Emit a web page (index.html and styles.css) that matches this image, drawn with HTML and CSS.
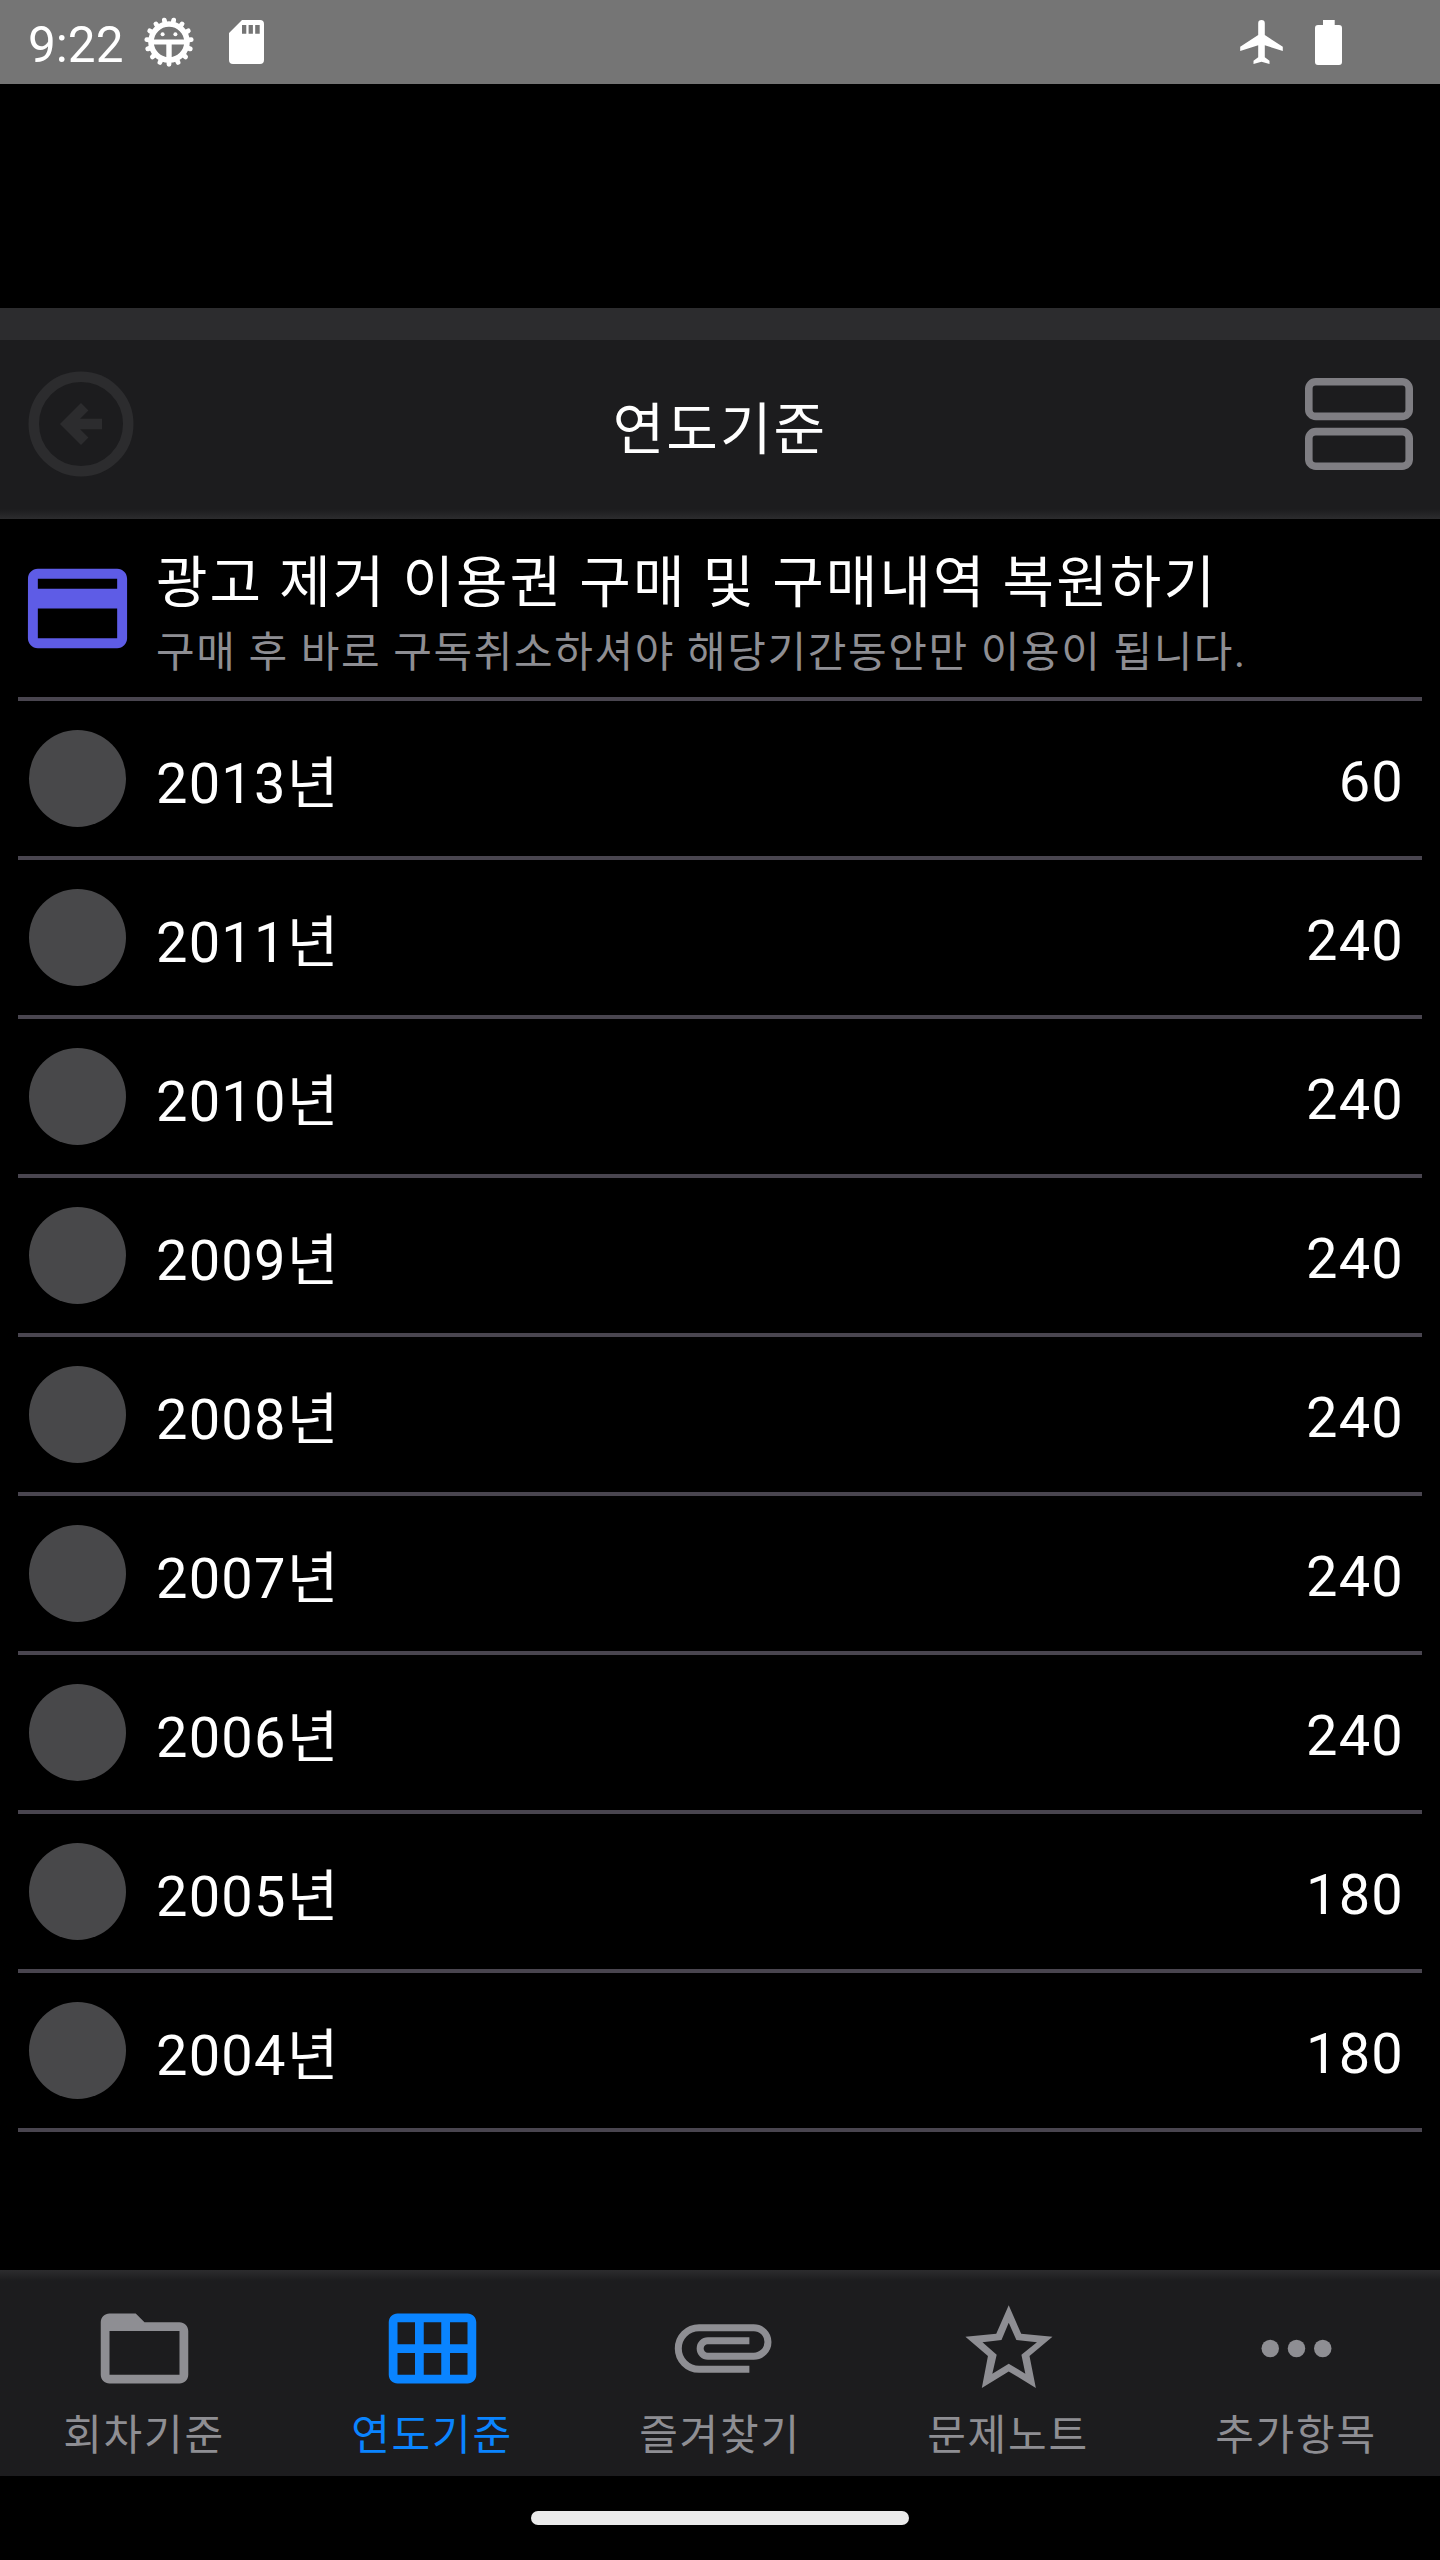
FILE: index.html
```html
<!DOCTYPE html>
<html lang="ko">
<head>
    <meta charset="UTF-8">
    <meta name="viewport" content="width=device-width, initial-scale=1.0">
    <link rel="stylesheet" href="styles.css">
    <title>연도기준</title>
</head>
<body>
    <div class="status-bar">
        <span class="time">9:22</span>
        <svg class="icon-debug" width="50" height="50" viewBox="-25 -25 50 50" fill="none" stroke="#fff">
            <circle r="18" stroke-width="5.6"/>
            <path stroke-width="4.8" stroke-linecap="round" d="M0 18V22.3M7.32 16.44L9.07 20.4M13.38 12.04L16.6 14.9M17.12 5.56L21.2 6.9M17.9-1.88L22.2-2.33M15.59-9L19.3-11.15M10.58-14.56L13.1-18.05M3.74-17.61L4.64-21.8M-7.32 16.44L-9.07 20.4M-13.38 12.04L-16.6 14.9M-17.12 5.56L-21.2 6.9M-17.9-1.88L-22.2-2.33M-15.59-9L-19.3-11.15M-10.58-14.56L-13.1-18.05M-3.74-17.61L-4.64-21.8"/>
            <path stroke-width="4.8" d="M-17 0H17"/>
            <path stroke-width="5.4" d="M0 0V17"/>
            <circle cx="-6.4" cy="-7.8" r="2" fill="#fff" stroke="none"/>
            <circle cx="6.4" cy="-7.8" r="2" fill="#fff" stroke="none"/>
        </svg>
        <svg class="icon-sd" width="35" height="44" viewBox="0 0 35 44" fill="#fff" fill-rule="evenodd">
            <path d="M13 0H31a4 4 0 0 1 4 4V40a4 4 0 0 1-4 4H4a4 4 0 0 1-4-4V13zM13 5v8.7h4.3V5zM19.6 5v8.7h4.3V5zM26.2 5v8.7h4.5V5z"/>
        </svg>
        <svg class="icon-plane" width="43" height="44" viewBox="0 0 42.6 44" fill="#fff">
            <path d="M18 3.3a3.3 3.3 0 0 1 6.6 0V15l18 11.8v4.2L24.6 25.3v12l4.7 3.5v3.2l-8-2.2-8 2.2v-3.2l4.7-3.5v-12L0 31v-4.2L18 15z"/>
        </svg>
        <svg class="icon-battery" width="27" height="45" viewBox="0 0 27 45" fill="#fff">
            <path d="M8 0H19.7V5H24a3 3 0 0 1 3 3V42a3 3 0 0 1-3 3H3a3 3 0 0 1-3-3V8a3 3 0 0 1 3-3H8z"/>
        </svg>
    </div>

    <div class="ad-space"></div>
    <div class="band"></div>

    <header class="toolbar">
        <svg class="back" width="126" height="126" viewBox="0 0 24 24">
            <circle cx="12" cy="12" r="9" fill="none" stroke="#2c2c2e" stroke-width="2"/>
            <path fill="#2c2c2e" d="M12 8l1.41 1.41L11.83 11H16v2h-4.17l1.58 1.59L12 16l-4-4z"/>
        </svg>
        <h1>연도기준</h1>
        <svg class="view" width="108" height="92" viewBox="0 0 108 92" fill="none" stroke="#7f7e83" stroke-width="7.6">
            <rect x="3.8" y="3.8" width="100.4" height="34.6" rx="7"/>
            <rect x="3.8" y="53.6" width="100.4" height="34.6" rx="7"/>
        </svg>
    </header>

    <main>
        <div class="row purchase">
            <div class="lead">
                <svg width="119" height="119" viewBox="0 0 24 24" fill="#5e5ce6">
                    <path d="M20 4H4c-1.11 0-1.99.89-1.99 2L2 18c0 1.11.89 2 2 2h16c1.11 0 2-.89 2-2V6c0-1.11-.89-2-2-2zm0 14H4v-6h16v6zm0-10H4V6h16v2z"/>
                </svg>
            </div>
            <div class="purchase-text">
                <h2>광고 제거 이용권 구매 및 구매내역 복원하기</h2>
                <p>구매 후 바로 구독취소하셔야 해당기간동안만 이용이 됩니다.</p>
            </div>
        </div>
        <div class="row">
            <div class="lead"><span class="dot"></span></div>
            <span class="year">2013년</span>
            <span class="count">60</span>
        </div>
        <div class="row">
            <div class="lead"><span class="dot"></span></div>
            <span class="year">2011년</span>
            <span class="count">240</span>
        </div>
        <div class="row">
            <div class="lead"><span class="dot"></span></div>
            <span class="year">2010년</span>
            <span class="count">240</span>
        </div>
        <div class="row">
            <div class="lead"><span class="dot"></span></div>
            <span class="year">2009년</span>
            <span class="count">240</span>
        </div>
        <div class="row">
            <div class="lead"><span class="dot"></span></div>
            <span class="year">2008년</span>
            <span class="count">240</span>
        </div>
        <div class="row">
            <div class="lead"><span class="dot"></span></div>
            <span class="year">2007년</span>
            <span class="count">240</span>
        </div>
        <div class="row">
            <div class="lead"><span class="dot"></span></div>
            <span class="year">2006년</span>
            <span class="count">240</span>
        </div>
        <div class="row">
            <div class="lead"><span class="dot"></span></div>
            <span class="year">2005년</span>
            <span class="count">180</span>
        </div>
        <div class="row">
            <div class="lead"><span class="dot"></span></div>
            <span class="year">2004년</span>
            <span class="count">180</span>
        </div>
    </main>

    <nav class="tabs">
        <div class="tab">
            <svg width="105" height="105" viewBox="0 0 24 24" fill="currentColor" fill-rule="evenodd">
                <path d="M10 4H4c-1.1 0-2 .9-2 2v12c0 1.1.9 2 2 2h16c1.1 0 2-.9 2-2V8c0-1.1-.9-2-2-2h-8zM4 8h16v10H4z"/>
            </svg>
            <span>회차기준</span>
        </div>
        <div class="tab active">
            <svg width="105" height="105" viewBox="0 0 24 24" fill="currentColor" fill-rule="evenodd">
                <path d="M4 4h16c1.1 0 2 .9 2 2v12c0 1.1-.9 2-2 2H4c-1.1 0-2-.9-2-2V6c0-1.1.9-2 2-2zM4 6v5h4V6zM10 6v5h4V6zM16 6v5h4V6zM4 13v5h4v-5zM10 13v5h4v-5zM16 13v5h4v-5z"/>
            </svg>
            <span>연도기준</span>
        </div>
        <div class="tab">
            <svg width="105" height="105" viewBox="0 0 24 24" fill="none" stroke="currentColor" stroke-width="1.6">
                <path d="M18.6 16.75H7.1a4.75 4.75 0 0 1 0-9.5h12.5a3.25 3.25 0 0 1 0 6.5H9.1a1.75 1.75 0 0 1 0-3.5h9.5"/>
            </svg>
            <span>즐겨찾기</span>
        </div>
        <div class="tab">
            <svg width="105" height="105" viewBox="0 0 24 24" fill="currentColor" fill-rule="evenodd">
                <path d="M12.05 2.1L14.9 8.65L22.05 9.3L16.8 13.7L18.25 21L12.05 17.25L5.9 21L7.3 13.7L2.15 9.3L9.2 8.65zM12.05 6.13L10.4 10.05L6.05 10.55L9.3 13.4L8.3 17.75L12.05 15.5L15.85 17.75L14.95 13.4L18.5 10.55L13.8 10.05z"/>
            </svg>
            <span>문제노트</span>
        </div>
        <div class="tab">
            <svg width="105" height="105" viewBox="0 0 24 24" fill="currentColor">
                <circle cx="6" cy="12" r="2"/>
                <circle cx="12" cy="12" r="2"/>
                <circle cx="18" cy="12" r="2"/>
            </svg>
            <span>추가항목</span>
        </div>
    </nav>

    <div class="home-bar"><span class="pill"></span></div>
</body>
</html>
```
FILE: styles.css
```css
body {
    margin: 0;
    width: 1440px;
    height: 2560px;
    display: flex;
    flex-direction: column;
    background-color: #000;
    color: #fff;
    font-family: Roboto, "Noto Sans CJK KR", sans-serif;
    overflow: hidden;
}

h1, h2, p {
    margin: 0;
    font-weight: 400;
}

svg {
    display: block;
    flex: none;
}

.status-bar {
    height: 84px;
    display: flex;
    align-items: center;
    background-color: #757575;
    box-sizing: border-box;
    padding: 0 98px 0 28px;
}

.time {
    font-size: 49.5px;
    line-height: 58px;
    padding-top: 5px;
    width: 116px;
}

.icon-sd {
    margin-left: 35px;
}

.icon-plane {
    margin-left: auto;
    margin-right: 32px;
}

.ad-space {
    height: 224px;
}

.band {
    height: 32px;
    background-color: #2c2c2e;
}

.toolbar {
    height: 179px;
    box-sizing: border-box;
    padding: 0 27px 11px 18px;
    display: grid;
    grid-template-columns: 126px 1fr 126px;
    align-items: center;
    background: linear-gradient(to top, #2c2c2e, #1c1c1e 10px);
}

.toolbar h1 {
    text-align: center;
    font-size: 56px;
    line-height: 84px;
    letter-spacing: 2.1px;
    padding: 11px 0 0 9px;
}

.view {
    justify-self: end;
}

main {
    flex: 1;
    padding: 0 18px;
}

.row {
    height: 155px;
    display: flex;
    align-items: center;
    border-bottom: 4px solid #49454f;
    font-size: 56px;
    letter-spacing: 1.2px;
}

.lead {
    width: 119px;
    margin-right: 19px;
    display: flex;
    justify-content: center;
}

.dot {
    width: 97px;
    height: 97px;
    border-radius: 50%;
    background-color: #48484a;
}

.year {
    line-height: 84px;
    padding-top: 10px;
}

.count {
    margin-left: auto;
    margin-right: 18px;
    line-height: 84px;
    padding-top: 6px;
}

.purchase {
    height: 178px;
}

.purchase-text {
    padding-top: 6px;
}

.purchase h2 {
    font-size: 56px;
    line-height: 84px;
    letter-spacing: 2.1px;
}

.purchase p {
    font-size: 42px;
    line-height: 56px;
    letter-spacing: 1.6px;
    color: #8e8e93;
}

.tabs {
    height: 206px;
    display: flex;
    background: linear-gradient(to bottom, #2c2c2e, #1c1c1e 11px);
}

.tab {
    flex: 1;
    display: flex;
    flex-direction: column;
    align-items: center;
    padding-top: 26px;
    color: #8e8e93;
}

.tab.active {
    color: #0a84ff;
}

.tab span {
    font-size: 42px;
    line-height: 62px;
    letter-spacing: 1.75px;
    margin-top: 4px;
}

.home-bar {
    height: 84px;
    display: flex;
    justify-content: center;
    align-items: center;
}

.pill {
    width: 378px;
    height: 14px;
    border-radius: 7px;
    background-color: #ebebeb;
}
```
